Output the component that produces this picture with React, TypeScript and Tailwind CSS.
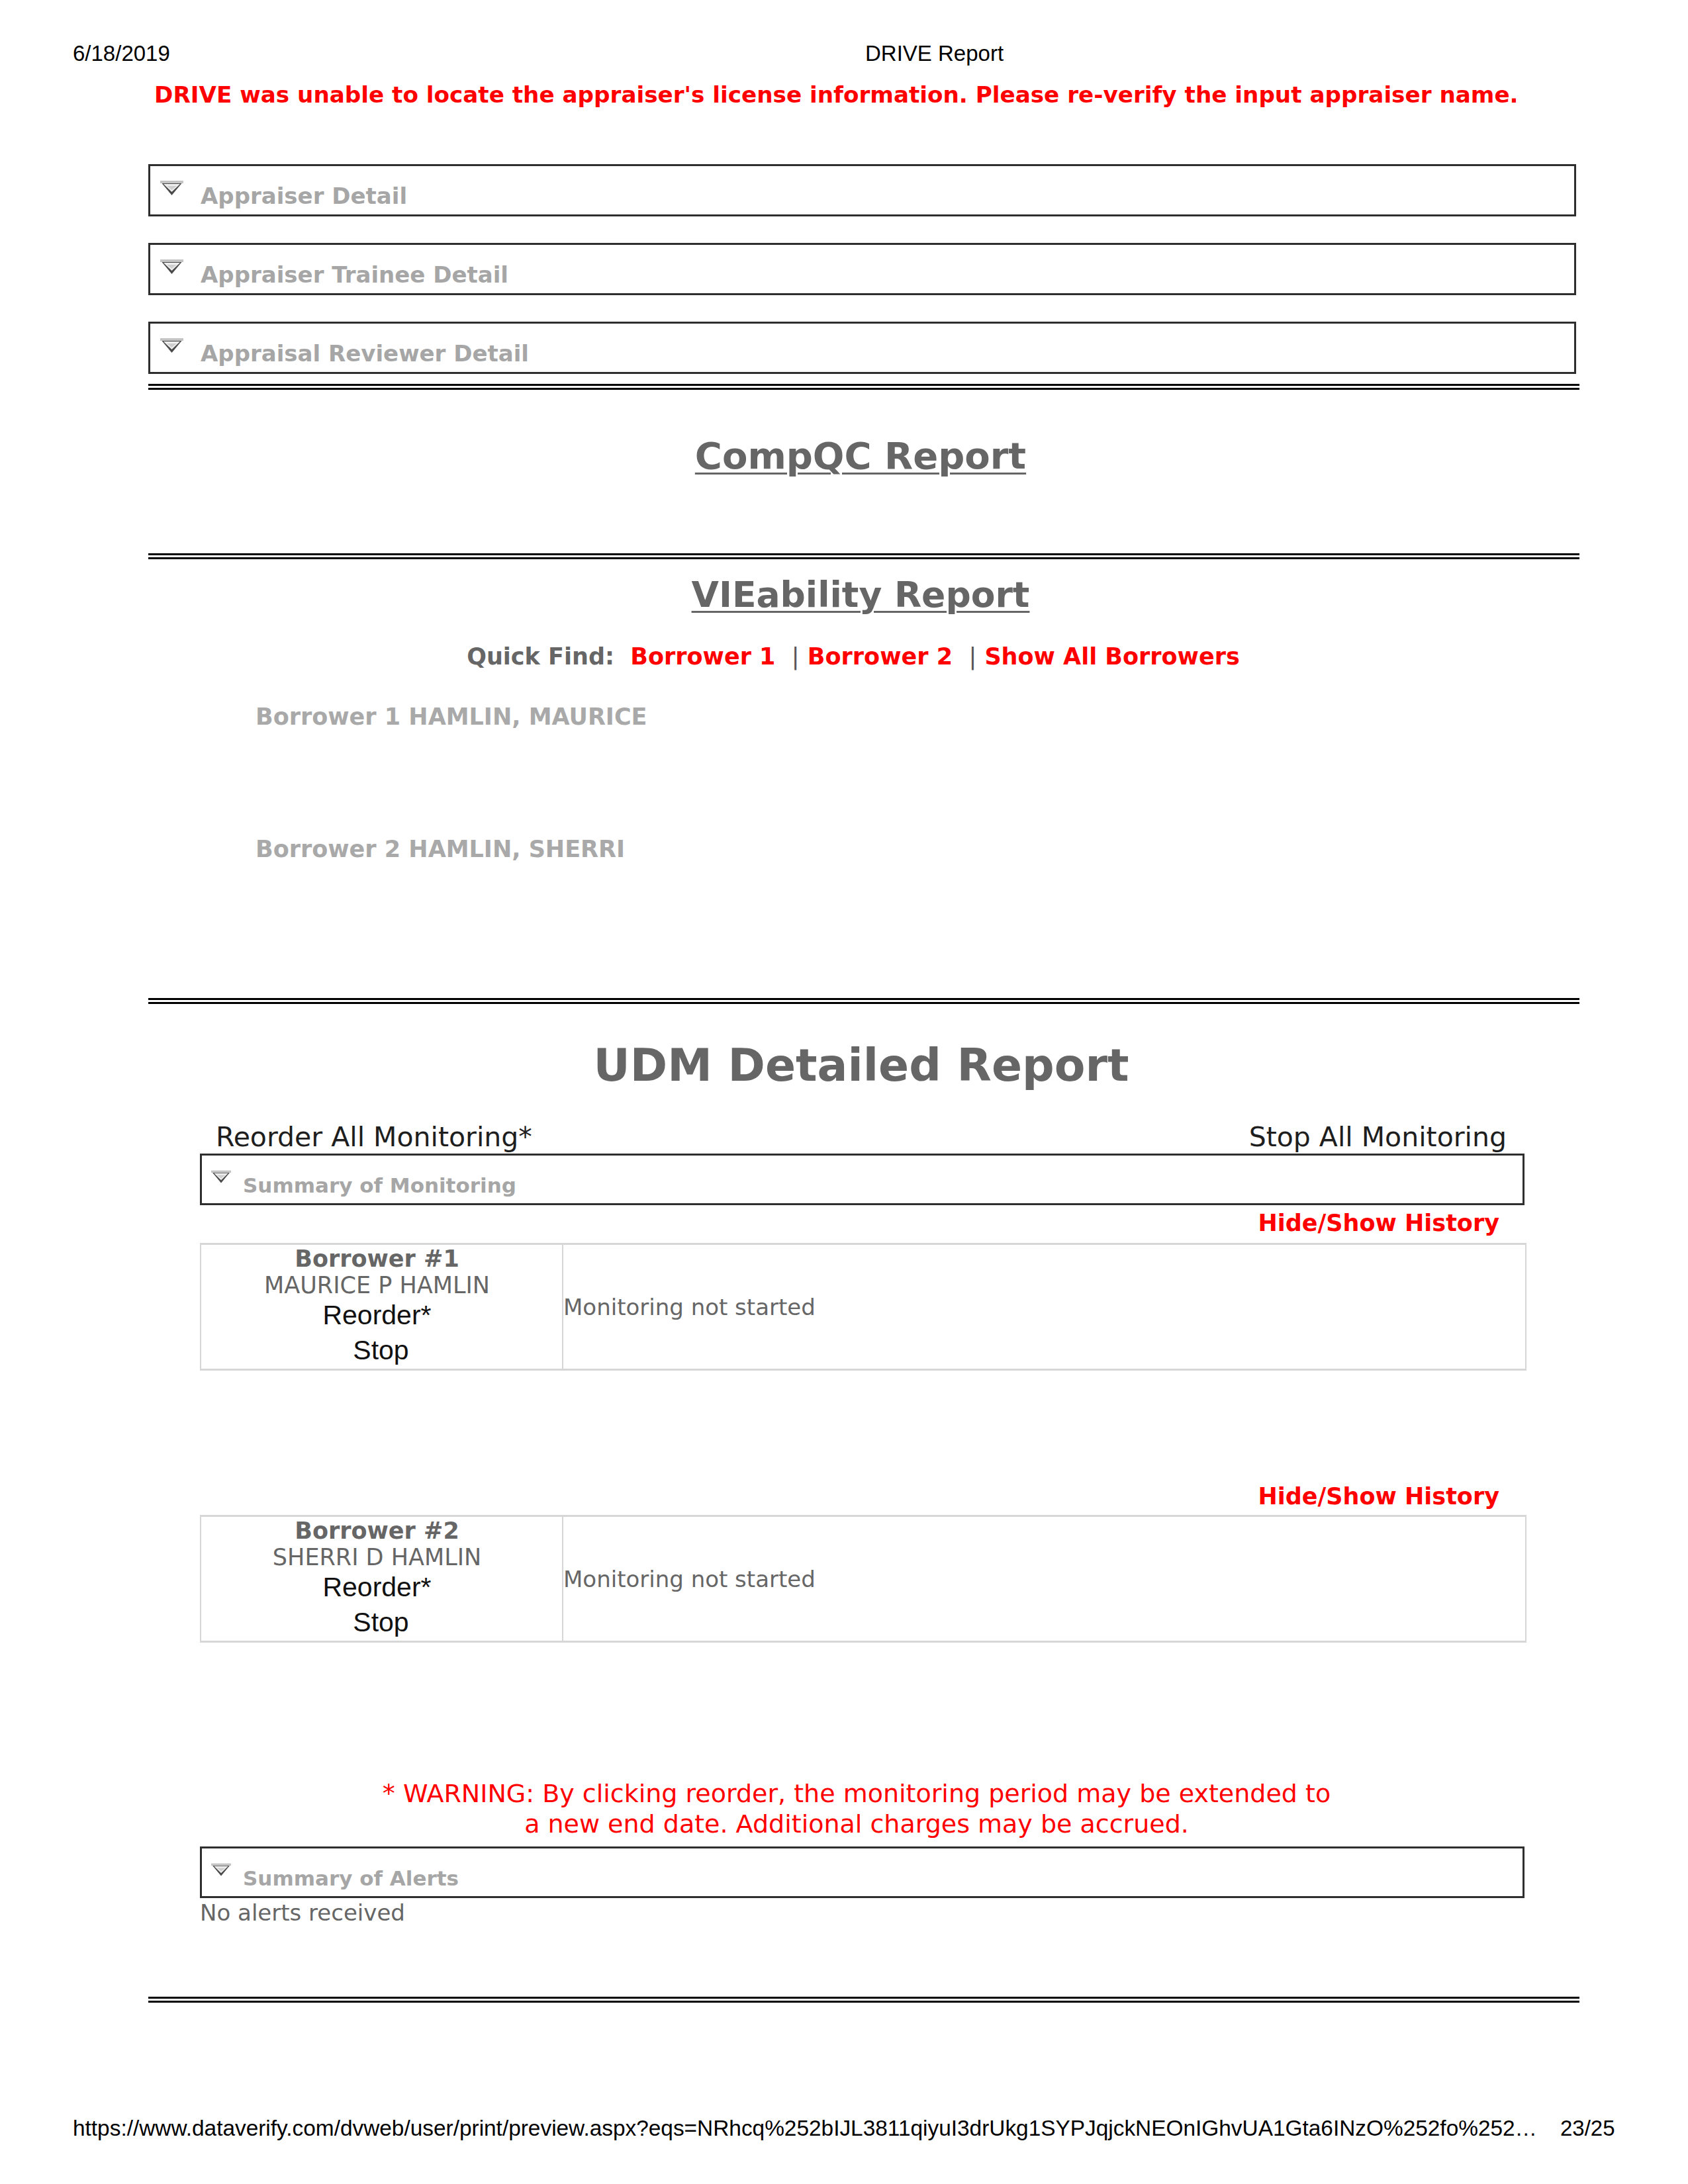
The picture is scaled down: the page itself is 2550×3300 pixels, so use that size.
import React from "react";

function Tri({ w = 35, h = 22 }: { w?: number; h?: number }) {
  return (
    <svg width={w} height={h} viewBox="0 0 35 22" className="block shrink-0">
      <polygon points="0,1 35,1 17.5,22" fill="#4a4a4a" />
      <polygon points="5,5 30,5 17.5,17" fill="#eeeeee" />
      <polygon points="10,8 25,8 17.5,14" fill="#cfcfcf" />
      <rect x="0" y="0" width="35" height="4" fill="#c4c4c4" />
    </svg>
  );
}

function DetailBox({ title }: { title: string }) {
  return (
    <div className="h-[79px] w-[2157px] border-[3px] border-[#2e2e2e] flex items-start pt-[22px] pl-[15px]">
      <Tri />
      <div className="ml-[26px] mt-[3px] text-[34px] leading-[40px] font-bold text-[#a6a6a6]">{title}</div>
    </div>
  );
}

function SummaryBox({ title }: { title: string }) {
  return (
    <div className="h-[78px] w-[2001px] border-[3px] border-[#2e2e2e] flex items-start pt-[22px] pl-[14px]">
      <Tri w={30} h={20} />
      <div className="ml-[18px] mt-[5px] text-[31px] leading-[36px] font-bold text-[#a6a6a6]">{title}</div>
    </div>
  );
}

function DoubleLine() {
  return <div className="h-[9px] w-[2162px] border-y-[3px] border-black bg-white" />;
}

function BorrowerTable({ num, name }: { num: number; name: string }) {
  return (
    <div className="h-[193px] w-[2004px] flex border-x-2 border-y-[3px] border-[#d6d6d6]">
      <div className="w-[545px] flex flex-col items-center pt-px pr-[14px]">
        <div className="text-[35px] leading-[40px] font-bold text-[#666]">Borrower #{num}</div>
        <div className="text-[35px] leading-[40px] text-[#666]">{name}</div>
        <div className="font-['Liberation_Sans',Arial,sans-serif] text-[41px] leading-[50px] text-[#111]">Reorder*</div>
        <div className="font-['Liberation_Sans',Arial,sans-serif] text-[41px] leading-[56px] text-[#111] ml-[12px]">Stop</div>
      </div>
      <div className="flex-1 border-l-2 border-[#d6d6d6] flex items-center">
        <div className="text-[34px] leading-[40px] text-[#666]">Monitoring not started</div>
      </div>
    </div>
  );
}

export default function App() {
  return (
    <div className="w-[2550px] h-[3300px] bg-white overflow-hidden font-['DejaVu_Sans',Verdana,sans-serif]">
      <div className="pt-[61px] flex text-[33px] leading-[40px] font-['Liberation_Sans',Arial,sans-serif] text-black">
        <div className="ml-[110px] w-[1197px]">6/18/2019</div>
        <div>DRIVE Report</div>
      </div>
      <div className="mt-[22px] ml-[233px] text-[34.2px] leading-[40px] font-bold text-[#f00] whitespace-nowrap">
        DRIVE was unable to locate the appraiser's license information. Please re-verify the input appraiser name.
      </div>

      <div className="ml-[224px] w-[2162px]">
        <div className="mt-[85px]">
          <DetailBox title="Appraiser Detail" />
        </div>
        <div className="mt-[40px]">
          <DetailBox title="Appraiser Trainee Detail" />
        </div>
        <div className="mt-[40px]">
          <DetailBox title="Appraisal Reviewer Detail" />
        </div>
        <div className="mt-[15px]">
          <DoubleLine />
        </div>

        <div className="mt-[68px] pr-[10px] text-center text-[56px] leading-[64px] font-bold text-[#666]">
          <span className="underline decoration-[3px] underline-offset-[6px]">CompQC Report</span>
        </div>

        <div className="mt-[115px]">
          <DoubleLine />
        </div>

        <div className="mt-[22px] pr-[10px] text-center text-[53.5px] leading-[64px] font-bold text-[#666]">
          <span className="underline decoration-[3px] underline-offset-[6px]">VIEability Report</span>
        </div>

        <div className="mt-[41px] pr-[32px] text-center text-[35px] leading-[40px] font-bold text-[#666] whitespace-pre">
          Quick Find:{"  "}
          <span className="text-[#f00]">Borrower 1</span>
          {"  "}
          <span className="font-normal text-[#555]">|</span>{" "}
          <span className="text-[#f00]">Borrower 2</span>
          {"  "}
          <span className="font-normal text-[#555]">|</span>{" "}
          <span className="text-[#f00]">Show All Borrowers</span>
        </div>

        <div className="mt-[51px] ml-[162px] text-[35px] leading-[40px] font-bold text-[#a9a9a9]">
          Borrower 1 HAMLIN, MAURICE
        </div>
        <div className="mt-[160px] ml-[162px] text-[35px] leading-[40px] font-bold text-[#a9a9a9]">
          Borrower 2 HAMLIN, SHERRI
        </div>

        <div className="mt-[205px]">
          <DoubleLine />
        </div>

        <div className="mt-[53px] pr-[8px] text-center text-[68px] leading-[80px] font-bold text-[#666]">
          UDM Detailed Report
        </div>

        <div className="ml-[78px] w-[2004px]">
          <div className="mt-[44px] flex justify-between pl-[24px] pr-[30px] text-[41px] leading-[48px] text-[#1e1e1e]">
            <span>Reorder All Monitoring*</span>
            <span>Stop All Monitoring</span>
          </div>
          <div className="mt-px">
            <SummaryBox title="Summary of Monitoring" />
          </div>

          <div className="mt-[7px] pr-[41px] text-right text-[35px] leading-[40px] font-bold text-[#f00]">
            Hide/Show History
          </div>
          <div className="mt-[10px]">
            <BorrowerTable num={1} name="MAURICE P HAMLIN" />
          </div>

          <div className="mt-[170px] pr-[41px] text-right text-[35px] leading-[40px] font-bold text-[#f00]">
            Hide/Show History
          </div>
          <div className="mt-[8px]">
            <BorrowerTable num={2} name="SHERRI D HAMLIN" />
          </div>

          <div className="mt-[205px] pr-[20px] text-center text-[38px] leading-[46px] text-[#f00]">
            * WARNING: By clicking reorder, the monitoring period may be extended to
            <br />
            a new end date. Additional charges may be accrued.
          </div>

          <div className="mt-[11px]">
            <SummaryBox title="Summary of Alerts" />
          </div>
          <div className="mt-[2px] text-[34px] leading-[40px] text-[#666]">No alerts received</div>
        </div>

        <div className="mt-[107px]">
          <DoubleLine />
        </div>
      </div>

      <div className="mt-[170px] flex text-[33px] leading-[40px] font-['Liberation_Sans',Arial,sans-serif] text-black whitespace-nowrap">
        <div className="ml-[110px] w-[2247px] overflow-hidden text-[33.4px]">
          https://www.dataverify.com/dvweb/user/print/preview.aspx?eqs=NRhcq%252bIJL3811qiyuI3drUkg1SYPJqjckNEOnIGhvUA1Gta6INzO%252fo%252…
        </div>
        <div>23/25</div>
      </div>
    </div>
  );
}
